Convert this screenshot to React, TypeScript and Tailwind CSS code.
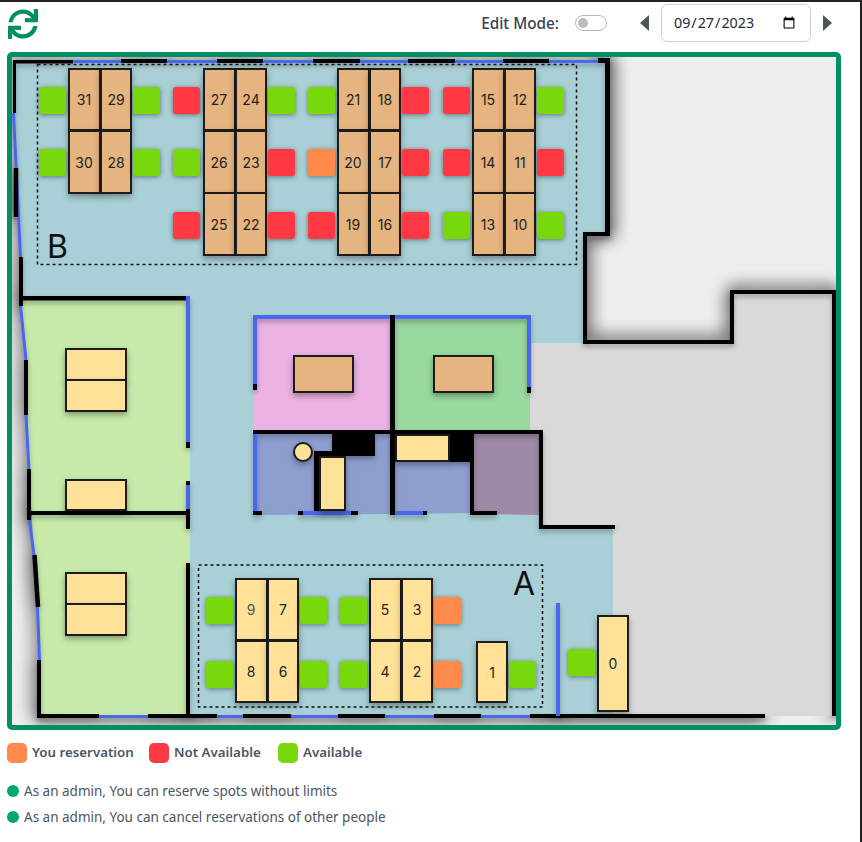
import { FaSync } from "react-icons/fa";

type Status = "g" | "r" | "o";

const seatColors: Record<Status, string> = {
  g: "bg-[#78d80b]",
  r: "bg-[#ff3844]",
  o: "bg-[#ff8a4b]",
};

// all map items use page coordinates, the map's inner corner sits at 12,57
const OX = 12;
const OY = 57;

const seats: [number, number, Status][] = [
  [39, 87, "g"], [133, 87, "g"], [173, 87, "r"], [268, 87, "g"], [308, 87, "g"], [402, 87, "r"], [443, 87, "r"], [537, 87, "g"],
  [39, 149, "g"], [133, 149, "g"], [173, 149, "g"], [268, 149, "r"], [308, 149, "o"], [402, 149, "r"], [443, 149, "r"], [537, 149, "r"],
  [173, 212, "r"], [268, 212, "r"], [308, 212, "r"], [402, 212, "r"], [443, 212, "g"], [537, 212, "g"],
  [206, 597, "g"], [300, 597, "g"], [340, 597, "g"], [434, 597, "o"],
  [206, 661, "g"], [300, 661, "g"], [340, 661, "g"], [434, 661, "o"], [509, 661, "g"],
  [568, 649, "g"],
];

const TAN = "bg-[#e6b47f]";
const YELLOW = "bg-[#ffe298]";

const desks: [number, number, number, number, string, string][] = [
  [68, 68, 33, 63, TAN, "31"], [100, 68, 32, 63, TAN, "29"], [68, 130, 33, 64, TAN, "30"], [100, 130, 32, 64, TAN, "28"],
  [203, 68, 33, 63, TAN, "27"], [235, 68, 32, 63, TAN, "24"], [203, 130, 33, 64, TAN, "26"], [235, 130, 32, 64, TAN, "23"], [203, 192, 33, 64, TAN, "25"], [235, 192, 32, 64, TAN, "22"],
  [337, 68, 33, 63, TAN, "21"], [369, 68, 32, 63, TAN, "18"], [337, 130, 33, 64, TAN, "20"], [369, 130, 32, 64, TAN, "17"], [337, 192, 33, 64, TAN, "19"], [369, 192, 32, 64, TAN, "16"],
  [472, 68, 33, 63, TAN, "15"], [504, 68, 32, 63, TAN, "12"], [472, 130, 33, 64, TAN, "14"], [504, 130, 32, 64, TAN, "11"], [472, 192, 33, 64, TAN, "13"], [504, 192, 32, 64, TAN, "10"],
  [235, 578, 33, 63, YELLOW, "9"], [267, 578, 32, 63, YELLOW, "7"], [235, 640, 33, 63, YELLOW, "8"], [267, 640, 32, 63, YELLOW, "6"],
  [369, 578, 33, 63, YELLOW, "5"], [401, 578, 32, 63, YELLOW, "3"], [369, 640, 33, 63, YELLOW, "4"], [401, 640, 32, 63, YELLOW, "2"],
  [476, 641, 32, 62, YELLOW, "1"], [597, 615, 32, 97, YELLOW, "0"],
  [65, 348, 62, 33, YELLOW, ""], [65, 379, 62, 33, YELLOW, ""], [65, 479, 62, 32, YELLOW, ""],
  [65, 572, 62, 33, YELLOW, ""], [65, 603, 62, 33, YELLOW, ""],
  [293, 355, 61, 38, TAN, ""], [433, 355, 61, 38, TAN, ""],
  [319, 456, 27, 55, YELLOW, ""], [395, 434, 55, 28, YELLOW, ""],
];

const BLUE = "#4a66f0";
const BLACK = "#000";

// x, y, w, h, colour
const walls: [number, number, number, number, string][] = [
  // top
  [13, 60, 60, 3.5, BLACK], [73, 60, 48, 3, BLUE], [121, 59, 46, 4, BLACK], [167, 60, 50, 3, BLUE], [217, 59, 46, 4, BLACK],
  [263, 60, 50, 3, BLUE], [313, 59, 47, 4, BLACK], [360, 60, 48, 3, BLUE], [408, 59, 47, 4, BLACK], [455, 60, 48, 3, BLUE],
  [503, 59, 46, 4, BLACK], [549, 60, 49, 3, BLUE], [598, 58, 12, 5, BLACK],
  // outer right side
  [605, 58, 5, 178, BLACK], [583, 232, 27, 4, BLACK], [583, 232, 4, 112, BLACK], [583, 340, 151, 4, BLACK],
  [730, 290, 4, 54, BLACK], [730, 290, 106, 4, BLACK], [832, 290, 4, 426, BLACK],
  // left side, straight parts
  [13, 60, 3, 53, BLACK], [19, 257, 4, 49, BLACK], [24, 360, 4, 55, BLACK], [27, 469, 4, 51, BLACK], [37, 660, 4, 58, BLACK],
  // bottom
  [37, 714, 62, 4, BLACK], [99, 715, 49, 3, BLUE], [148, 714, 69, 4, BLACK], [217, 715, 26, 3, BLUE], [243, 714, 48, 4, BLACK],
  [291, 715, 47, 3, BLUE], [338, 714, 47, 4, BLACK], [385, 715, 49, 3, BLUE], [434, 714, 47, 4, BLACK], [481, 715, 49, 3, BLUE],
  [530, 714, 235, 4, BLACK],
  // side rooms
  [21, 296, 167, 4.5, BLACK], [186, 296, 4, 146, BLUE], [186, 442, 4, 6, BLACK], [186, 481, 4, 5, BLACK], [186, 485, 4, 24, BLUE],
  [186, 509, 4, 20, BLACK], [30, 511, 158, 4, BLACK], [186, 563, 4, 153, BLACK],
  // center rooms
  [253, 315, 278, 4, BLUE], [253, 315, 4, 69, BLUE], [253, 384, 4, 6, BLACK], [527, 315, 4, 72, BLUE], [527, 387, 4, 6, BLACK],
  [390, 315, 5, 200, BLACK], [253, 430, 290, 4, BLACK], [253, 434, 4, 77, BLUE],
  [253, 511, 9, 4, BLACK], [298, 511, 5, 4, BLACK], [303, 511, 48, 4, BLUE], [351, 511, 7, 4, BLACK], [395, 511, 28, 4, BLUE], [423, 511, 4, 4, BLACK],
  [332, 434, 43, 22, BLACK], [314, 451, 18, 5, BLACK], [314, 451, 5, 60, BLACK], [314, 509, 32, 2, BLACK],
  [450, 434, 24, 28, BLACK], [470, 434, 4, 81, BLACK], [470, 511, 27, 4, BLACK],
  [539, 430, 4, 99, BLACK], [539, 525, 76, 4, BLACK],
  [556, 603, 4, 113, BLUE],
];

const slanted: [string, string, number][] = [
  ["13.5,113 20.5,257", BLUE, 3],
  ["16,168 16,217", BLACK, 4.5],
  ["20.5,306 26,360", BLUE, 3],
  ["26,415 29,470", BLUE, 3],
  ["29.5,520 34,555", BLUE, 3],
  ["34.5,555 38,607", BLACK, 4.5],
  ["37.5,607 39.5,660", BLUE, 3],
];

const Walls = ({ filter }: { filter: string }) => (
  <g filter={filter}>
    {slanted.map(([points, color, width]) => (
      <polyline key={points} points={points} stroke={color} strokeWidth={width} fill="none" />
    ))}
    {walls.map(([x, y, w, h, color]) => (
      <rect key={`${x}-${y}-${w}-${h}`} x={x} y={y} width={w} height={h} fill={color} />
    ))}
  </g>
);

const FloorPlan = () => (
  <svg className="absolute left-0 top-0" width={824} height={668} viewBox="12 57 824 668">
    <defs>
      {/* wide shadow, ends up only on the bare floor because the rooms paint over it */}
      <filter id="outerShadow" filterUnits="userSpaceOnUse" x="0" y="40" width="862" height="700">
        <feGaussianBlur in="SourceAlpha" stdDeviation="9" result="blur" />
        <feComponentTransfer in="blur" result="shadow">
          <feFuncA type="linear" slope="1.8" />
        </feComponentTransfer>
        <feMerge>
          <feMergeNode in="shadow" />
        </feMerge>
      </filter>
      <filter id="innerShadow" filterUnits="userSpaceOnUse" x="0" y="40" width="862" height="700">
        <feDropShadow dx="0" dy="3" stdDeviation="2.5" floodColor="#000" floodOpacity="0.3" />
      </filter>
    </defs>
    <rect x={12} y={57} width={824} height={668} fill="#eeeeee" />
    <Walls filter="url(#outerShadow)" />
    <polygon
      points="530,343 733,343 733,292 835,292 835,716 530,716"
      fill="#d9d9d9"
    />
    <polygon
      points="13,61 607,61 607,234 585,234 585,343 530,343 530,432 541,432 541,527 613,527 613,716 190,716 190,298 21,298"
      fill="#a9d0d6"
    />
    <polygon
      points="21,298 190,298 190,716 39,716 39,660 37,607 34,555 29,470 26,360"
      fill="#c7eaaa"
    />
    <rect x={253} y={315} width={138} height={116} fill="#edb2e4" />
    <rect x={392} y={315} width={138} height={116} fill="#98d9a0" />
    <polygon points="253,432 392,432 392,514 253,515" fill="#8e9ecf" />
    <polygon points="392,432 472,432 472,513 392,514" fill="#8e9ecf" />
    <polygon points="472,432 541,432 541,515 472,514" fill="#9e89a6" />
    <Walls filter="url(#innerShadow)" />
    <rect x={37.5} y={64.5} width={539} height={200} fill="none" stroke="#111" strokeWidth={1.5} strokeDasharray="3 3" />
    <rect x={198.5} y={565} width={344} height={142} fill="none" stroke="#111" strokeWidth={1.5} strokeDasharray="3 3" />
  </svg>
);

export default function App() {
  return (
    <div className="w-[862px] h-[842px] bg-white border-t-2 border-r-2 border-[#222222] font-['Noto_Sans',sans-serif] overflow-hidden">
      <div className="h-[50px] pl-2 pr-[28px] flex items-start justify-between">
        <FaSync className="mt-[7px] text-[#008f63]" size={30} />
        <div className="flex items-center mt-[2px] h-[38px]">
          <span className="text-[15.3px] font-medium text-[#374151]">Edit Mode:</span>
          <div className="ml-4 w-8 h-4 rounded-full border border-[#b5b9bd] bg-white flex items-center pl-[2px]">
            <div className="w-[10px] h-[10px] rounded-full bg-[#bdbdbd]" />
          </div>
          <div className="ml-[33px] w-0 h-0 border-y-8 border-y-transparent border-r-[9px] border-r-[#4b5555]" />
          <input
            type="date"
            defaultValue="2023-09-27"
            className="ml-3 w-[150px] h-[38px] pl-[11px] pr-3 rounded-md border border-[#ced4da] text-[14.3px] text-[#1f2937] bg-white"
          />
          <div className="ml-3 w-0 h-0 border-y-8 border-y-transparent border-l-[9px] border-l-[#4b5555]" />
        </div>
      </div>

      <div className="relative ml-[7px] w-[834px] h-[678px] border-[5px] border-[#008f63] rounded-[5px] overflow-hidden box-border">
        <FloorPlan />
        {desks.map(([x, y, w, h, color, label], i) => (
          <div
            key={i}
            className={`absolute ${color} ${w === 33 ? "pr-px" : ""} ${label === "9" ? "text-[#555555]" : "text-[#222222]"} border-2 border-[#1c1c1c] flex items-center justify-center text-[14px] font-['Inter',sans-serif] shadow-[0_3px_6px_rgba(0,0,0,0.35)]`}
            style={{ left: x - OX, top: y - OY, width: w, height: h }}
          >
            {label}
          </div>
        ))}
        {seats.map(([x, y, status], i) => (
          <div
            key={i}
            className={`absolute w-[27px] h-[27px] rounded-[3px] ${seatColors[status]} shadow-[0_1px_5px_rgba(0,0,0,0.45)]`}
            style={{ left: x - OX, top: y - OY }}
          />
        ))}
        <div className="absolute left-[281px] top-[385px] w-5 h-5 rounded-full bg-[#ffe298] border-2 border-[#1c1c1c] shadow-[0_3px_6px_rgba(0,0,0,0.35)]" />
        <span className="absolute left-[35px] top-[170px] text-[32px] leading-[40px] text-[#111111] font-['Inter',sans-serif]">B</span>
        <span className="absolute left-[501px] top-[507px] text-[32px] leading-[40px] text-[#111111] font-['Inter',sans-serif]">A</span>
      </div>

      <div className="pl-[7px] mt-[13px] flex items-center text-[13.3px] font-semibold text-[#4b5563] whitespace-nowrap">
        <div className="w-5 h-5 rounded-[5px] bg-[#ff8a4b]" />
        <span className="ml-[5px] w-[100px]">You reservation</span>
        <div className="ml-[17px] w-5 h-5 rounded-[5px] bg-[#ff3844]" />
        <span className="ml-[5px] w-[88px]">Not Available</span>
        <div className="ml-4 w-5 h-5 rounded-[5px] bg-[#78d80b]" />
        <span className="ml-[5px]">Available</span>
      </div>

      <div className="pl-[7px] mt-[19px] flex flex-col gap-2 text-[13.5px] leading-[18px] text-[#4b5563]">
        <div className="flex items-center gap-[5px]">
          <div className="w-3 h-3 rounded-full bg-[#00a870]" />
          <span>As an admin, You can reserve spots without limits</span>
        </div>
        <div className="flex items-center gap-[5px]">
          <div className="w-3 h-3 rounded-full bg-[#00a870]" />
          <span>As an admin, You can cancel reservations of other people</span>
        </div>
      </div>
    </div>
  );
}
